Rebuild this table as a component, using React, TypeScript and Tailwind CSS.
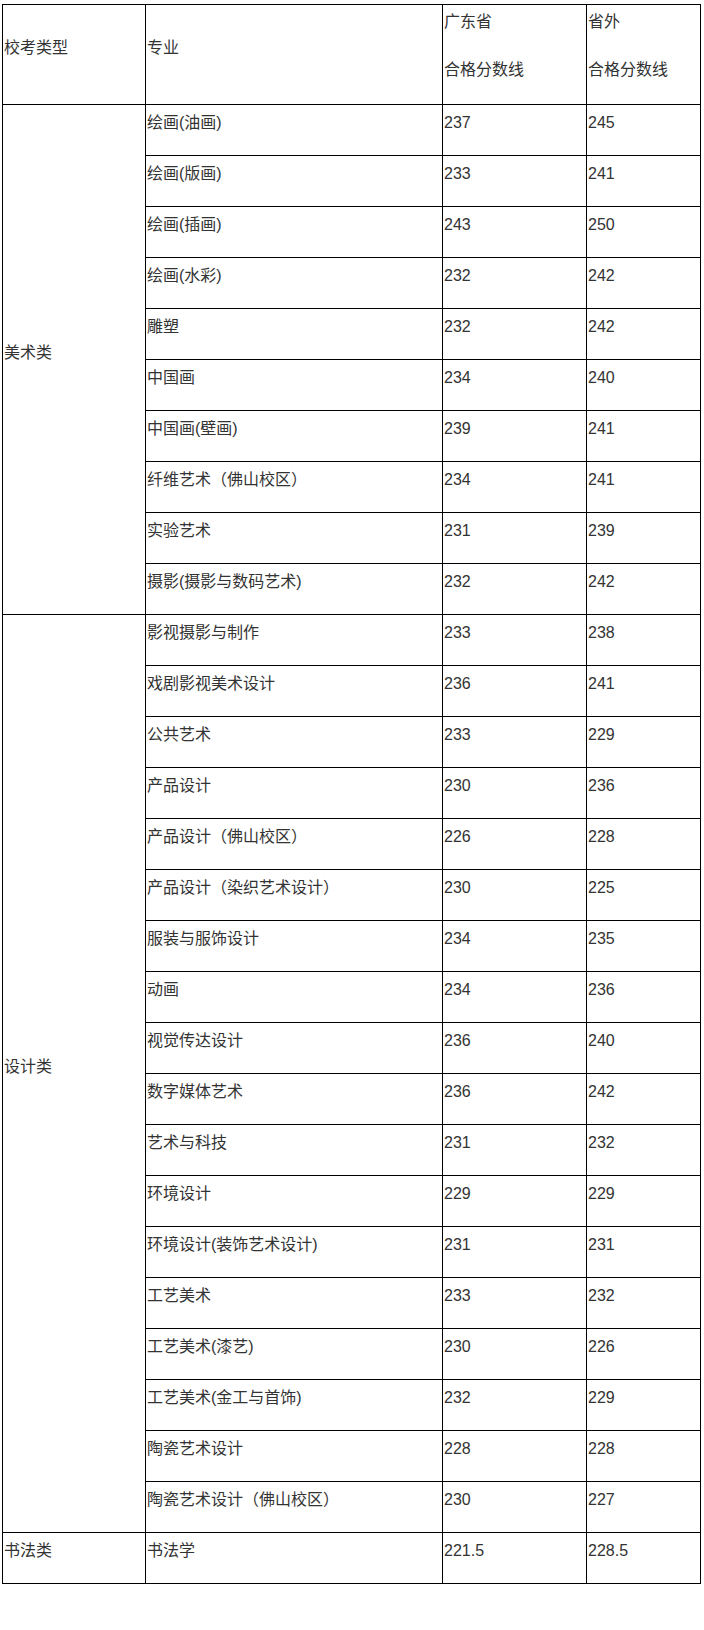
import React from "react";

const art: [string, string, string][] = [
  ["绘画(油画)", "237", "245"],
  ["绘画(版画)", "233", "241"],
  ["绘画(插画)", "243", "250"],
  ["绘画(水彩)", "232", "242"],
  ["雕塑", "232", "242"],
  ["中国画", "234", "240"],
  ["中国画(壁画)", "239", "241"],
  ["纤维艺术（佛山校区）", "234", "241"],
  ["实验艺术", "231", "239"],
  ["摄影(摄影与数码艺术)", "232", "242"],
];

const design: [string, string, string][] = [
  ["影视摄影与制作", "233", "238"],
  ["戏剧影视美术设计", "236", "241"],
  ["公共艺术", "233", "229"],
  ["产品设计", "230", "236"],
  ["产品设计（佛山校区）", "226", "228"],
  ["产品设计（染织艺术设计）", "230", "225"],
  ["服装与服饰设计", "234", "235"],
  ["动画", "234", "236"],
  ["视觉传达设计", "236", "240"],
  ["数字媒体艺术", "236", "242"],
  ["艺术与科技", "231", "232"],
  ["环境设计", "229", "229"],
  ["环境设计(装饰艺术设计)", "231", "231"],
  ["工艺美术", "233", "232"],
  ["工艺美术(漆艺)", "230", "226"],
  ["工艺美术(金工与首饰)", "232", "229"],
  ["陶瓷艺术设计", "228", "228"],
  ["陶瓷艺术设计（佛山校区）", "230", "227"],
];

const calli: [string, string, string][] = [["书法学", "221.5", "228.5"]];

const td = "border border-black align-middle p-0 pl-px h-[51px]";

function Txt({ children }: { children: React.ReactNode }) {
  return <div className="leading-6 pb-[14px] whitespace-nowrap">{children}</div>;
}

function Group({ name, rows }: { name: string; rows: [string, string, string][] }) {
  return (
    <>
      {rows.map((r, i) => (
        <tr key={r[0]}>
          {i === 0 && (
            <td rowSpan={rows.length} className={td}>
              <Txt>{name}</Txt>
            </td>
          )}
          <td className={td}>
            <Txt>{r[0]}</Txt>
          </td>
          <td className={td}>
            <Txt>{r[1]}</Txt>
          </td>
          <td className={td}>
            <Txt>{r[2]}</Txt>
          </td>
        </tr>
      ))}
    </>
  );
}

export default function App() {
  return (
    <div
      className="bg-white min-h-[1630px] pt-1 pl-[2px] text-[16px] text-[#333333]"
      style={{ fontFamily: '"Liberation Sans", "Noto Sans CJK SC", sans-serif' }}
    >
      <table className="border-collapse border border-black table-fixed w-[698px]">
        <colgroup>
          <col className="w-[143px]" />
          <col className="w-[297px]" />
          <col className="w-[144px]" />
          <col className="w-[114px]" />
        </colgroup>
        <tbody>
          <tr>
            <td className="border border-black align-middle p-0 pl-px h-[100px]">
              <Txt>校考类型</Txt>
            </td>
            <td className="border border-black align-middle p-0 pl-px h-[100px]">
              <Txt>专业</Txt>
            </td>
            <td className="border border-black align-middle p-0 pl-px h-[100px]">
              <div className="leading-6 whitespace-nowrap">
                <div className="mb-[24px]">广东省</div>
                <div className="pb-[18px]">合格分数线</div>
              </div>
            </td>
            <td className="border border-black align-middle p-0 pl-px h-[100px]">
              <div className="leading-6 whitespace-nowrap">
                <div className="mb-[24px]">省外</div>
                <div className="pb-[18px]">合格分数线</div>
              </div>
            </td>
          </tr>
          <Group name="美术类" rows={art} />
          <Group name="设计类" rows={design} />
          <Group name="书法类" rows={calli} />
        </tbody>
      </table>
    </div>
  );
}
